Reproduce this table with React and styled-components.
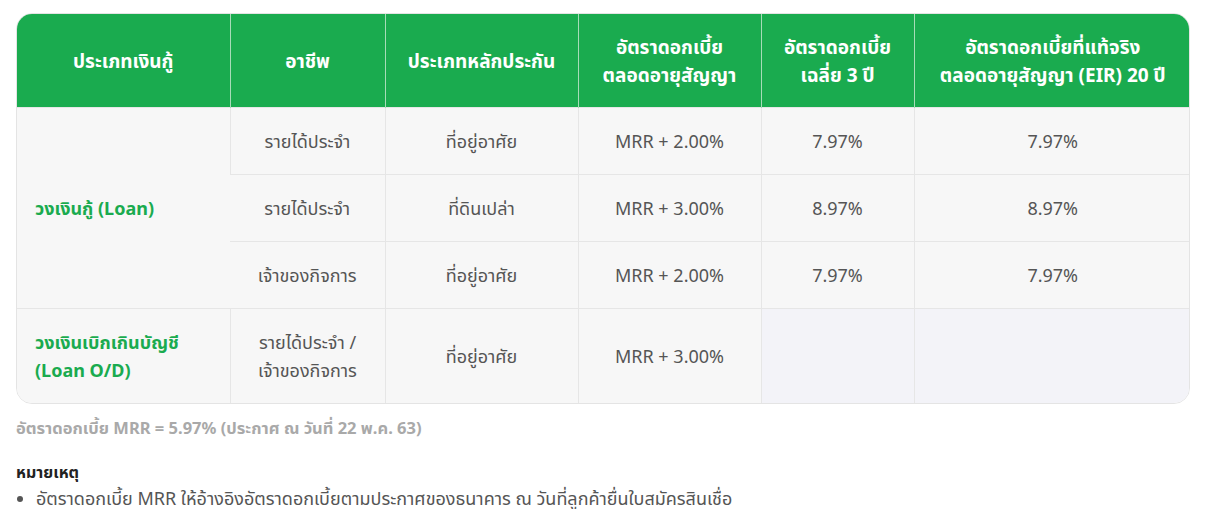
import React from 'react';
import styled, { createGlobalStyle } from 'styled-components';

const GlobalStyle = createGlobalStyle`
    body {
        margin: 0;
        background: #ffffff;
        font-family: "Noto Sans", "Noto Sans Thai", "Noto Sans Thai Looped", sans-serif;
    }
`;

const Page = styled.div`
    padding: 13px 18px 0 16px;
    box-sizing: border-box;
    width: 1208px;
`;

const Card = styled.div`
    width: 1174px;
    border: 1px solid #e4e4e4;
    border-radius: 16px;
    overflow: hidden;
    box-sizing: border-box;
`;

const Table = styled.table`
    width: 100%;
    border-collapse: collapse;
    table-layout: fixed;
`;

const HeadCell = styled.th`
    background: #1aab4f;
    color: #ffffff;
    font-weight: 700;
    font-size: 19px;
    line-height: 28px;
    height: 93px;
    padding: 0 4px;
    text-align: center;
    border-left: 1px solid #a7dcb8;
    &:first-child { border-left: none; }
`;

const Cell = styled.td`
    background: ${p => (p.$empty ? '#f3f3f8' : '#f7f7f7')};
    color: ${p => (p.$accent ? '#1aab4f' : '#555555')};
    font-weight: ${p => (p.$accent ? 700 : 400)};
    font-size: 18px;
    line-height: 28px;
    text-align: ${p => (p.$accent ? 'left' : 'center')};
    padding: ${p => (p.$accent ? '0 18px' : '0 8px')};
    height: ${p => p.$h || 66}px;
    border-left: 1px solid #e6e6e6;
    border-top: 1px solid #e6e6e6;
    &:first-child { border-left: none; }
`;

const Note = styled.div`
    margin-top: 13px;
    color: #a9a9a9;
    font-weight: 700;
    font-size: 16.5px;
    line-height: 22px;
`;

const NoteTitle = styled.div`
    margin-top: 22px;
    color: #222222;
    font-weight: 700;
    font-size: 16px;
    line-height: 22px;
`;

const NoteList = styled.ul`
    margin: 4px 0 0;
    padding-left: 20px;
    color: #555555;
    font-size: 18px;
    line-height: 22px;
`;

const cols = [213, 155, 193, 183, 153, 277];

const heads = [
    ['ประเภทเงินกู้'],
    ['อาชีพ'],
    ['ประเภทหลักประกัน'],
    ['อัตราดอกเบี้ย', 'ตลอดอายุสัญญา'],
    ['อัตราดอกเบี้ย', 'เฉลี่ย 3 ปี'],
    ['อัตราดอกเบี้ยที่แท้จริง', 'ตลอดอายุสัญญา (EIR) 20 ปี'],
];

const loanRows = [
    ['รายได้ประจำ', 'ที่อยู่อาศัย', 'MRR + 2.00%', '7.97%', '7.97%'],
    ['รายได้ประจำ', 'ที่ดินเปล่า', 'MRR + 3.00%', '8.97%', '8.97%'],
    ['เจ้าของกิจการ', 'ที่อยู่อาศัย', 'MRR + 2.00%', '7.97%', '7.97%'],
];

const lines = arr => arr.map((t, i) => (
    <React.Fragment key={i}>{i > 0 && <br />}{t}</React.Fragment>
));

export default function App() {
    return (
        <Page>
            <GlobalStyle />
            <Card>
                <Table>
                    <colgroup>
                        {cols.map((w, i) => <col key={i} style={{ width: w }} />)}
                    </colgroup>
                    <thead>
                        <tr>
                            {heads.map((h, i) => <HeadCell key={i}>{lines(h)}</HeadCell>)}
                        </tr>
                    </thead>
                    <tbody>
                        {loanRows.map((r, i) => (
                            <tr key={i}>
                                {i === 0 && <Cell $accent rowSpan={3}>วงเงินกู้ (Loan)</Cell>}
                                {r.map((v, j) => <Cell key={j}>{v}</Cell>)}
                            </tr>
                        ))}
                        <tr>
                            <Cell $accent $h={94}>{lines(['วงเงินเบิกเกินบัญชี', '(Loan O/D)'])}</Cell>
                            <Cell $h={94}>{lines(['รายได้ประจำ /', 'เจ้าของกิจการ'])}</Cell>
                            <Cell $h={94}>ที่อยู่อาศัย</Cell>
                            <Cell $h={94}>MRR + 3.00%</Cell>
                            <Cell $h={94} $empty />
                            <Cell $h={94} $empty />
                        </tr>
                    </tbody>
                </Table>
            </Card>
            <Note>อัตราดอกเบี้ย MRR = 5.97% (ประกาศ ณ วันที่ 22 พ.ค. 63)</Note>
            <NoteTitle>หมายเหตุ</NoteTitle>
            <NoteList>
                <li>อัตราดอกเบี้ย MRR ให้อ้างอิงอัตราดอกเบี้ยตามประกาศของธนาคาร ณ วันที่ลูกค้ายื่นใบสมัครสินเชื่อ</li>
            </NoteList>
        </Page>
    );
}
